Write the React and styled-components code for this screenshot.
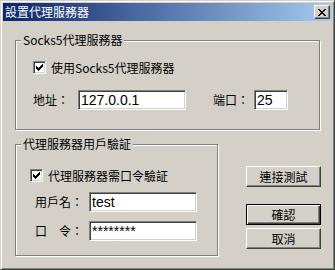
import React from 'react'
import styled, { createGlobalStyle } from 'styled-components'

const GlobalStyle = createGlobalStyle`
  html, body {
    margin: 0;
    padding: 0;
    background: #d4d0c8;
  }
  body {
    font-family: "Noto Sans CJK TC", "Noto Sans", sans-serif;
    font-size: 12px;
    color: #000;
  }
`

const Window = styled.div`
  box-sizing: border-box;
  width: 335px;
  height: 270px;
  padding: 2px;
  background: #d4d0c8;
  border: 1px solid;
  border-color: #d4d0c8 #404040 #404040 #d4d0c8;
  box-shadow: inset 1px 1px 0 #fff, inset -1px -1px 0 #808080;
  display: flex;
  flex-direction: column;
`

const TitleBar = styled.div`
  height: 18px;
  display: flex;
  align-items: center;
  justify-content: space-between;
  padding: 0 2px 0 2px;
  background: linear-gradient(to right, #0a246a, #a6caf0);
`

const TitleText = styled.span`
  color: #fff;
  font-size: 12px;
  line-height: 14px;
`

const CloseButton = styled.div`
  box-sizing: border-box;
  width: 16px;
  height: 14px;
  display: flex;
  align-items: center;
  justify-content: center;
  background: #d4d0c8;
  border: 1px solid;
  border-color: #fff #404040 #404040 #fff;
  box-shadow: inset -1px -1px 0 #808080;
`

const Body = styled.div`
  flex: 1;
  padding: 12px 0 0 12px;
  display: flex;
  flex-direction: column;
`

const Group = styled.fieldset`
  box-sizing: border-box;
  width: ${({ $width }) => $width}px;
  margin: ${({ $top }) => $top || 0}px 0 0 0;
  padding: 0;
  min-width: 0;
  border: 1px solid #808080;
  box-shadow: 1px 1px 0 #fff, inset 1px 1px 0 #fff;
`

const Legend = styled.legend`
  margin-left: 5px;
  padding: 0 2px;
  font-size: 12px;
  line-height: 14px;
  background: #d4d0c8;
`

const GroupInner = styled.div`
  padding: ${({ $pad }) => $pad};
  display: flex;
  flex-direction: column;
`

const CheckRow = styled.label`
  display: flex;
  align-items: center;
  height: 13px;
  line-height: 13px;
  gap: 5px;
`

const CheckBox = styled.span`
  box-sizing: border-box;
  width: 13px;
  height: 13px;
  flex: none;
  display: flex;
  align-items: center;
  justify-content: center;
  background: #fff;
  border: 1px solid;
  border-color: #808080 #fff #fff #808080;
  box-shadow: inset 1px 1px 0 #404040, inset -1px -1px 0 #d4d0c8;
`

const FieldRow = styled.div`
  display: flex;
  align-items: center;
  height: 20px;
  margin-top: ${({ $top }) => $top}px;
  margin-left: ${({ $indent }) => $indent || 0}px;
`

const Label = styled.span`
  width: ${({ $width }) => $width}px;
  margin-left: ${({ $gap }) => $gap || 0}px;
  flex: none;
  white-space: pre;
  line-height: 14px;
`

const TextBox = styled.input`
  box-sizing: border-box;
  width: ${({ $width }) => $width}px;
  height: 20px;
  margin: 0;
  padding: 0 0 0 2px;
  background: #fff;
  border: 1px solid;
  border-color: #808080 #fff #fff #808080;
  box-shadow: inset 1px 1px 0 #404040, inset -1px -1px 0 #d4d0c8;
  font-family: "Liberation Sans", Arial, sans-serif;
  font-size: 14px;
  color: #000;
  outline: none;
`

const Bottom = styled.div`
  display: flex;
  align-items: flex-start;
`

const ButtonColumn = styled.div`
  display: flex;
  flex-direction: column;
  margin-left: 28px;
  padding-top: 36px;
`

const Button = styled.div`
  box-sizing: border-box;
  width: 75px;
  height: 21px;
  margin-top: ${({ $top }) => $top || 0}px;
  display: flex;
  align-items: center;
  justify-content: center;
  background: #d4d0c8;
  font-size: 12px;
  border: 1px solid;
  border-color: ${({ $default }) => ($default ? '#000' : '#fff #404040 #404040 #fff')};
  box-shadow: ${({ $default }) =>
    $default
      ? 'inset 1px 1px 0 #fff, inset -1px -1px 0 #404040, inset -2px -2px 0 #808080'
      : 'inset -1px -1px 0 #808080, inset 1px 1px 0 #d4d0c8'};
`

const Check = () => (
  <svg width="7" height="7" viewBox="0 0 7 7" shapeRendering="crispEdges">
    <path d="M0 2h1v1h1v1h1v-1h1v-1h1v-1h1v-1h1v3h-1v1h-1v1h-1v1h-1v1h-1v-1h-1v-1h-1z" fill="#000" />
  </svg>
)

const CloseX = () => (
  <svg width="8" height="7" viewBox="0 0 8 7" shapeRendering="crispEdges">
    <path d="M0 0h2l2 2.5 2-2.5h2l-3 3.5 3 3.5h-2l-2-2.5-2 2.5h-2l3-3.5z" fill="#000" />
  </svg>
)

export default function App() {
  return (
    <>
      <GlobalStyle />
      <Window>
        <TitleBar>
          <TitleText>設置代理服務器</TitleText>
          <CloseButton>
            <CloseX />
          </CloseButton>
        </TitleBar>
        <Body>
          <Group $width={305}>
            <Legend>Socks5代理服務器</Legend>
            <GroupInner $pad="14px 0 19px 17px">
              <CheckRow>
                <CheckBox>
                  <Check />
                </CheckBox>
                使用Socks5代理服務器
              </CheckRow>
              <FieldRow $top={16}>
                <Label $width={45}>地址：</Label>
                <TextBox $width={108} defaultValue="127.0.0.1" />
                <Label $width={41} $gap={27}>端口：</Label>
                <TextBox $width={34} defaultValue="25" />
              </FieldRow>
            </GroupInner>
          </Group>
          <Bottom>
            <Group $width={203} $top={7}>
              <Legend>代理服務器用戶驗証</Legend>
              <GroupInner $pad="18px 0 14px 14px">
                <CheckRow>
                  <CheckBox>
                    <Check />
                  </CheckBox>
                  代理服務器需口令驗証
                </CheckRow>
                <FieldRow $top={10} $indent={5}>
                  <Label $width={54}>用戶名：</Label>
                  <TextBox $width={108} defaultValue="test" />
                </FieldRow>
                <FieldRow $top={9} $indent={5}>
                  <Label $width={54}>口　令：</Label>
                  <TextBox $width={108} defaultValue="********" />
                </FieldRow>
              </GroupInner>
            </Group>
            <ButtonColumn>
              <Button>連接測試</Button>
              <Button $default $top={17}>確認</Button>
              <Button $top={3}>取消</Button>
            </ButtonColumn>
          </Bottom>
        </Body>
      </Window>
    </>
  )
}
